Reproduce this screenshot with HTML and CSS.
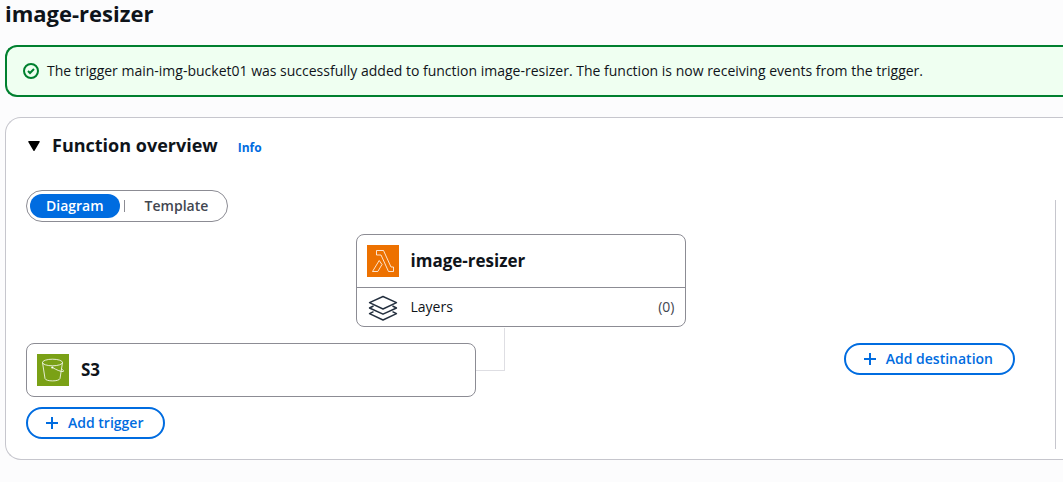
FILE: index.html
```html
<!DOCTYPE html>
<html lang="en">
<head>
<meta charset="utf-8">
<title>image-resizer</title>
<link rel="stylesheet" href="styles.css">
</head>
<body>
<main class="page">
  <h1 class="page-title">image-resizer</h1>

  <div class="flash" role="status">
    <svg class="flash-icon" viewBox="0 0 16 16" width="16" height="16" aria-hidden="true"><circle cx="8" cy="8" r="7"/><path d="M5 8l2 2 4-4"/></svg>
    <p class="flash-text">The trigger main-img-bucket01 was successfully added to function image-resizer. The function is now receiving events from the trigger.</p>
  </div>

  <section class="panel">
    <header class="panel-header">
      <button class="collapse" type="button" aria-expanded="true" aria-label="Collapse Function overview"><svg viewBox="0 0 12 10" width="12" height="10" aria-hidden="true"><path d="M1 0h10q1.300 0 .7 1L6.700 9.500q-.7 1-1.400 0L.3 1Q-.3 0 1 0z"/></svg></button>
      <h2 class="panel-title">Function overview</h2>
      <a class="info" href="#info">Info</a>
    </header>

    <div class="panel-body">
      <div class="overview">
        <div class="segmented" role="group" aria-label="View">
          <button class="segment segment-active" type="button" aria-pressed="true">Diagram</button>
          <span class="segment-divider"></span>
          <button class="segment" type="button" aria-pressed="false">Template</button>
        </div>

        <div class="function-card">
          <div class="card-row">
            <svg class="service-icon" viewBox="0 0 32 32" width="32" height="32" aria-hidden="true"><path fill="#ed7100" d="M0 0h32v32H0z"/><path class="lambda-line" d="M9.500 5.500h7l7.500 16.500h2.500v4.500h-5l-7.500-16.500h-4.500zM12.200 15.500L5.500 26.500h5.300l4.200-7z"/></svg>
            <h3 class="card-title">image-resizer</h3>
          </div>
          <div class="layers-row">
            <svg class="layers-icon" viewBox="0 0 32 28" width="32" height="28" aria-hidden="true"><path d="M16 3.500l13.500 6.200L16 16 2.500 9.700zM6.500 13l-4 2L16 21.200l13.500-6.200-4-2M6.500 18.700l-4 2L16 27l13.500-6.300-4-2"/></svg>
            <span>Layers</span>
            <span class="layers-count">(0)</span>
          </div>
        </div>

        <div class="connections">
          <div class="triggers">
            <div class="card-row trigger-card">
              <svg class="service-icon" viewBox="0 0 32 32" width="32" height="32" aria-hidden="true"><path fill="#7aa116" d="M0 0h32v32H0z"/><g class="bucket-line"><ellipse cx="15.500" cy="8.500" rx="10" ry="3.300"/><path d="M5.500 8.500L8 24.500c.7 3.200 14.300 3.200 15 0l2.500-16"/><path d="M15.500 13.500c3.500 2.200 9 4.600 10.800 4 .9-.6-.6-1.900-1.900-2.600"/></g><circle cx="15.300" cy="13.500" r="1.100" fill="#fff"/></svg>
              <h3 class="card-title">S3</h3>
            </div>
            <button class="add-button" type="button"><svg viewBox="0 0 16 16" width="16" height="16" aria-hidden="true"><path d="M8 2v12M2 8h12"/></svg>Add trigger</button>
          </div>
          <div class="connector"></div>
          <div class="destinations">
            <button class="add-button" type="button"><svg viewBox="0 0 16 16" width="16" height="16" aria-hidden="true"><path d="M8 2v12M2 8h12"/></svg>Add destination</button>
          </div>
        </div>
      </div>
      <div class="side-rule"></div>
    </div>
  </section>
</main>
</body>
</html>
```
FILE: styles.css
```css
* {
  box-sizing: border-box;
}

body {
  margin: 0;
  background: #fcfcfd;
  color: #0f141a;
  font: 14px/20px "Open Sans", "Noto Sans", sans-serif;
}

h1,
h2,
h3,
p {
  margin: 0;
}

h1,
h2,
h3 {
  font-weight: 700;
}

button {
  font: inherit;
  font-weight: 600;
  cursor: pointer;
}

.page {
  display: flex;
  flex-direction: column;
  padding-left: 5px;
}

.page-title {
  margin-bottom: 19px;
  font-size: 22px;
  line-height: 26px;
}

.flash {
  display: flex;
  gap: 8px;
  align-items: center;
  margin-bottom: 20px;
  padding: 14px 16px;
  border: 2px solid #00802f;
  border-right: 0;
  border-radius: 12px 0 0 12px;
  background: #effff1;
}

.flash-icon {
  flex: none;
  fill: none;
  stroke: #00802f;
  stroke-width: 2;
}

.flash-text {
  line-height: 20px;
}

.panel {
  padding: 12px 7px 10px 20px;
  border: 1px solid #c6c6cd;
  border-right: 0;
  border-radius: 16px 0 0 16px;
  background: #fff;
}

.panel-header {
  display: flex;
  align-items: center;
  margin-bottom: 28px;
}

.collapse {
  display: flex;
  margin-right: 10px;
  padding: 2px;
  border: 0;
  background: none;
}

.panel-title {
  margin-right: 20px;
  padding-bottom: 2px;
  font-size: 18px;
  line-height: 30px;
}

.info {
  padding-top: 4px;
  color: #006ce0;
  font-size: 12px;
  font-weight: 700;
  line-height: 16px;
  text-decoration: none;
}

.panel-body {
  display: flex;
  gap: 40px;
}

.overview {
  display: flex;
  flex: 1;
  flex-direction: column;
  padding-bottom: 10px;
}

.segmented {
  display: flex;
  gap: 4px;
  align-items: center;
  align-self: flex-start;
  margin-bottom: 12px;
  padding: 3px;
  border: 1px solid #8c8c94;
  border-radius: 16px;
}

.segment {
  padding: 2px 16px;
  border: 0;
  border-radius: 12px;
  background: none;
  color: #424650;
}

.segment-active {
  background: #006ce0;
  color: #fff;
}

.segment-divider {
  width: 1px;
  height: 12px;
  background: #8c8c94;
}

.function-card {
  align-self: center;
  width: 330px;
  border: 1px solid #8c8c94;
  border-radius: 8px;
}

.card-row {
  display: flex;
  gap: 12px;
  align-items: center;
  padding: 10px;
}

.service-icon {
  flex: none;
}

.card-title {
  font-size: 17px;
  line-height: 32px;
}

.lambda-line,
.bucket-line {
  fill: none;
  stroke: #fff;
  stroke-opacity: 0.8;
  stroke-width: 1;
}

.layers-row {
  display: flex;
  gap: 12px;
  align-items: center;
  padding: 5px 10px;
  border-top: 1px solid #8c8c94;
}

.layers-icon {
  fill: none;
  stroke: #232f3e;
  stroke-width: 1.4;
  stroke-linejoin: round;
}

.layers-count {
  margin-left: auto;
  color: #424650;
}

.connections {
  display: flex;
  align-items: flex-start;
}

.triggers {
  display: flex;
  flex: 0 1 450px;
  flex-direction: column;
  gap: 10px;
  align-items: flex-start;
  padding-top: 16px;
}

.trigger-card {
  align-self: stretch;
  border: 1px solid #8c8c94;
  border-radius: 8px;
}

.connector {
  width: 29px;
  height: 43px;
  margin-top: 1px;
  border: solid #dedee3;
  border-width: 0 1px 1px 0;
}

.destinations {
  margin-left: auto;
  padding-top: 16px;
}

.add-button {
  display: flex;
  gap: 8px;
  align-items: center;
  padding: 4px 20px 4px 16px;
  border: 2px solid #006ce0;
  border-radius: 16px;
  background: #fff;
  color: #006ce0;
}

.add-button svg {
  fill: none;
  stroke: currentColor;
  stroke-width: 2;
}

.side-rule {
  width: 1px;
  margin-top: 10px;
  background: #c6c6cd;
}
```
